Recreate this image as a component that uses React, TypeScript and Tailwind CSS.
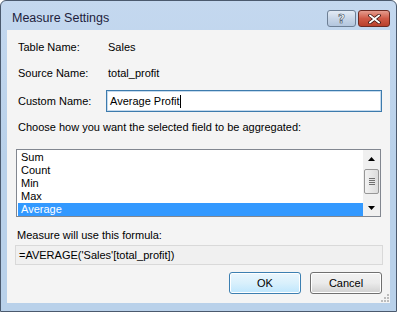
import React from "react";

const ui = { fontFamily: '"Liberation Sans", Arial, sans-serif' };

function ScrollArrow({ up }: { up?: boolean }) {
  return (
    <svg width="7" height="4" viewBox="0 0 7 4" className="block">
      {up ? <path d="M3.5 0 L7 4 L0 4 Z" fill="#000" /> : <path d="M0 0 L7 0 L3.5 4 Z" fill="#000" />}
    </svg>
  );
}

export default function App() {
  const items = ["Sum", "Count", "Min", "Max", "Average"];
  const selected = "Average";

  return (
    <div
      className="w-[397px] h-[312px] border border-[#4b5a6e] rounded-t-[6px] bg-gradient-to-b from-[#c4d8ef] via-[#b9d1ea] to-[#b9d1ea] flex flex-col text-[11px] text-black overflow-hidden"
      style={ui}
    >
      {/* Title bar */}
      <div className="h-[29px] flex items-start shrink-0">
        <span
          className="ml-[11px] mt-[9px] text-[12.5px] leading-[16px] text-[#1e1e3c]"
          style={{ fontFamily: '"Segoe UI", "Liberation Sans", sans-serif' }}
        >
          Measure Settings
        </span>
        <div className="ml-auto mr-[6px] mt-[9px] flex gap-[2px]">
          <div className="w-[29px] h-[17px] rounded-[3px] border border-[#6d7f95] bg-gradient-to-b from-[#e3ebf5] via-[#c8d6e8] to-[#b3c6de] flex items-center justify-center">
            <span className="text-[12px] leading-none font-bold text-white" style={{ WebkitTextStroke: "0.6px #3c4a5c", fontFamily: '"DejaVu Sans", sans-serif' }}>?</span>
          </div>
          <div className="w-[32px] h-[17px] rounded-[3px] border border-[#6b2a22] bg-gradient-to-b from-[#e49c8f] via-[#cf5a47] to-[#b9402c] flex items-center justify-center">
            <svg width="13" height="10" viewBox="0 0 13 10">
              <path d="M2 1.5 L11 8.5 M11 1.5 L2 8.5" stroke="#3a1410" strokeWidth="3.4" strokeLinecap="square" />
              <path d="M2 1.5 L11 8.5 M11 1.5 L2 8.5" stroke="#fff" strokeWidth="1.8" strokeLinecap="square" />
            </svg>
          </div>
        </div>
      </div>

      {/* Client area */}
      <div className="ml-[6px] mr-[6px] mb-[8px] flex-1 bg-[#f4f4f4] flex flex-col relative">
        <div className="mt-[8px] h-[18px] flex items-center">
          <span className="ml-[11px] w-[90px]">Table Name:</span>
          <span>Sales</span>
        </div>
        <div className="mt-[8px] h-[18px] flex items-center">
          <span className="ml-[11px] w-[90px]">Source Name:</span>
          <span>total_profit</span>
        </div>
        <div className="mt-[8px] h-[22px] flex items-center">
          <span className="ml-[11px] w-[88px]">Custom Name:</span>
          <div className="flex-1 mr-[8px] h-[22px] border border-[#3d7bad] bg-white flex items-center pl-[3px] shadow-[inset_0_0_0_1px_#c5daed]">
            <span>Average Profit</span>
            <span className="w-[1px] h-[13px] bg-black" />
          </div>
        </div>
        <div className="mt-[8px] h-[14px] flex items-center">
          <span className="ml-[11px]">Choose how you want the selected field to be aggregated:</span>
        </div>

        {/* List box */}
        <div className="mt-[15px] ml-[9px] mr-[9px] h-[68px] border border-[#828790] bg-white flex">
          <div className="flex-1 pt-[1px] pl-[1px]">
            {items.map((it) => (
              <div
                key={it}
                className={
                  "h-[13px] leading-[13px] pl-[3px] " +
                  (it === selected ? "bg-[#3399ff] text-white" : "")
                }
              >
                {it}
              </div>
            ))}
          </div>
          <div className="w-[17px] bg-[#f0f0f0] flex flex-col items-center">
            <div className="h-[17px] flex items-center justify-center">
              <ScrollArrow up />
            </div>
            <div className="mt-[2px] w-[15px] h-[25px] rounded-[2px] border border-[#979797] bg-gradient-to-r from-[#f2f2f2] to-[#dcdcdc] flex flex-col items-center justify-center gap-[1px]">
              <div className="w-[6px] h-[1px] bg-[#6f6f6f]" />
              <div className="w-[6px] h-[1px] bg-[#6f6f6f]" />
              <div className="w-[6px] h-[1px] bg-[#6f6f6f]" />
              <div className="w-[6px] h-[1px] bg-[#6f6f6f]" />
            </div>
            <div className="mt-auto h-[17px] flex items-center justify-center">
              <ScrollArrow />
            </div>
          </div>
        </div>

        <div className="mt-[11px] h-[14px] flex items-center">
          <span className="ml-[10px]">Measure will use this formula:</span>
        </div>
        <div className="mt-[3px] ml-[8px] mr-[7px] h-[20px] border border-[#d9d9d9] bg-[#f0f0f0] flex items-center pl-[3px]">
          =AVERAGE('Sales'[total_profit])
        </div>

        <div className="mt-[7px] mr-[8px] flex justify-end gap-[9px]">
          <button
            className="w-[72px] h-[22px] rounded-[3px] border border-[#3c7fb1] bg-gradient-to-b from-[#eaf6fd] via-[#d9f0fc] to-[#bee6fd] shadow-[inset_0_0_0_1px_#fff] text-[11px] text-black"
            style={ui}
          >
            OK
          </button>
          <button
            className="w-[72px] h-[22px] rounded-[3px] border border-[#707070] bg-gradient-to-b from-[#f2f2f2] via-[#ebebeb] to-[#d0d0d0] shadow-[inset_0_0_0_1px_#fff] text-[11px] text-black"
            style={ui}
          >
            Cancel
          </button>
        </div>

        {/* Size grip */}
        <svg width="10" height="10" viewBox="0 0 10 10" className="absolute right-[1px] bottom-[1px]">
          {[
            [8, 2], [8, 5], [5, 5], [8, 8], [5, 8], [2, 8],
          ].map(([x, y]) => (
            <rect key={`${x}-${y}`} x={x} y={y} width="2" height="2" fill="#bcbcbc" />
          ))}
        </svg>
      </div>
    </div>
  );
}
